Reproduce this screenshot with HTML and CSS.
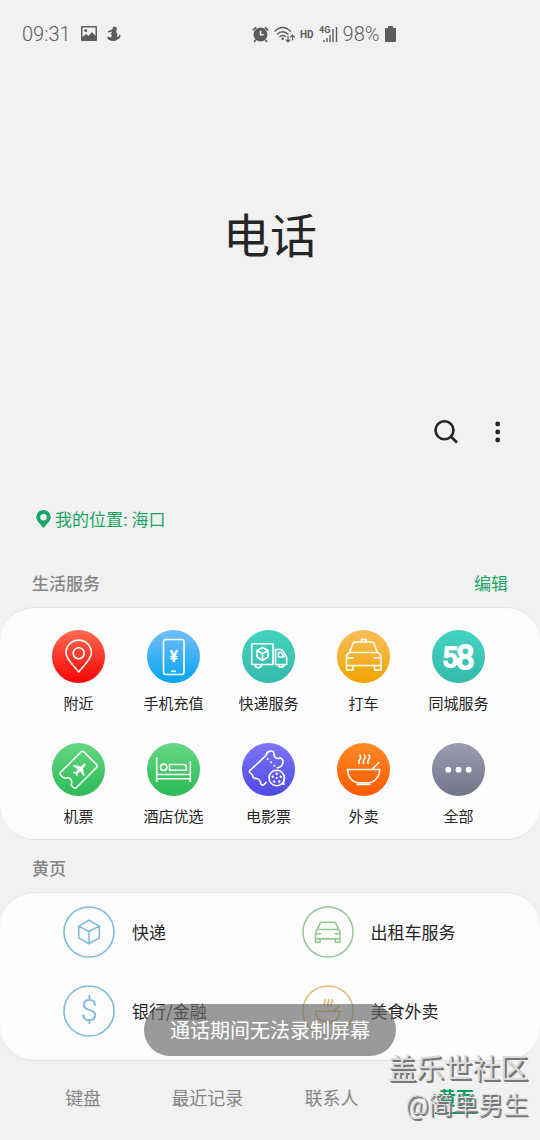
FILE: index.html
```html
<!DOCTYPE html>
<html lang="zh-CN">
<head>
<meta charset="utf-8">
<meta name="viewport" content="width=device-width, initial-scale=1">
<title>电话</title>
<link rel="stylesheet" href="styles.css">
</head>
<body>
<div class="screen">
  <div class="status">
    <div class="status-group status-left">
      <span class="status-text">09:31</span>
      <svg width="16" height="16" viewBox="0 0 16 16"><path fill="currentColor" fill-rule="evenodd" d="M1 0H15Q16 0 16 1V14Q16 15 15 15H1Q0 15 0 14V1Q0 0 1 0ZM1.500 1.500V11L5 8L7.500 10L11 6L14.500 10V1.500Z"/><circle cx="4.700" cy="4.500" r="1.500" fill="currentColor"/></svg>
      <svg width="14" height="16" viewBox="0 0 14 16"><path fill="currentColor" d="M5.500 2Q7-.5 9.500 1.500Q10.500 3.500 9 5.500Q11 8 10 11Q12 11 12.500 8.500L13.500 9Q13.500 12.500 10.500 13.500Q8 16 3.500 14.500Q-.5 13.500 .5 10.500L4 11.500L5 9L3.500 8L5.500 5.500L1 6.500V5L5.500 3.500Z"/></svg>
    </div>
    <div class="status-group">
      <svg width="17" height="17" viewBox="0 0 16 16"><path fill="currentColor" fill-rule="evenodd" d="M8 1.500A6.600 6.600 0 1 1 8 14.700A6.600 6.600 0 0 1 8 1.500ZM7.300 4.500V9H11V7.600H8.800V4.500Z"/><path d="M.8 4L4 1.300M12 1.300L15.200 4M3.500 13L2 15M12.500 13L14 15" stroke="currentColor" stroke-width="1.600" fill="none"/></svg>
      <svg width="21" height="17" viewBox="0 0 21 17"><g fill="none" stroke="currentColor" stroke-width="1.500"><path d="M.5 5.500Q8.500-2.500 17 5.500M3 8.500Q8.500 3 14.500 8.500M5.500 11Q8.500 8 12 11"/><path d="M14 10V15.500M11.700 13.500L14 15.800L16.300 13.500M18.500 14.500V9M16.200 11.300L18.500 9L20.800 11.300" stroke-width="1.200"/></g><circle cx="8.700" cy="12.800" r="1.300" fill="currentColor"/></svg>
      <span class="status-hd">HD</span>
      <svg width="19" height="18" viewBox="0 0 19 18"><text class="status-4g" x="0" y="8">4G</text><path d="M5 17V15M8 17V13M11 17V10M14 17V4M17.500 17V2" stroke="currentColor" stroke-width="1.400"/></svg>
      <span class="status-text">98%</span>
      <svg width="11" height="16" viewBox="0 0 11 16"><path fill="currentColor" d="M3 0H8V2H10Q11 2 11 3V15Q11 16 10 16H1Q0 16 0 15V3Q0 2 1 2H3Z"/></svg>
    </div>
  </div>

  <header class="hero"><h1>电话</h1></header>

  <div class="actions">
    <button class="action" type="button" aria-label="搜索"><svg width="26" height="26" viewBox="0 0 26 26"><circle cx="11.500" cy="11.300" r="9" fill="none" stroke="currentColor" stroke-width="2.600"/><path d="M17.500 17.300L24 23.500" stroke="currentColor" stroke-width="2.800"/></svg></button>
    <button class="action" type="button" aria-label="更多选项"><svg width="26" height="26" viewBox="0 0 26 26" fill="currentColor"><circle cx="12.700" cy="5" r="2.400"/><circle cx="12.700" cy="13" r="2.400"/><circle cx="12.700" cy="21" r="2.400"/></svg></button>
  </div>

  <main>
    <div class="location">
      <svg width="15" height="18" viewBox="0 0 15 18"><path fill="currentColor" fill-rule="evenodd" d="M7.500 0A7.200 7.200 0 0 1 14.700 7.200C14.700 11 10 14.500 7.500 18C5 14.500 .3 11 .3 7.200A7.200 7.200 0 0 1 7.500 0ZM7.500 4A3.300 3.300 0 1 0 7.500 10.600A3.300 3.300 0 1 0 7.500 4Z"/></svg>
      <span>我的位置: 海口</span>
    </div>

    <div class="section-head">
      <h2>生活服务</h2>
      <button class="edit" type="button">编辑</button>
    </div>
    <section class="card services">
      <button class="service" type="button">
        <span class="disc red"><svg viewBox="0 0 53 53"><path d="M26.700 42C22 35.500 14 29.500 14 22.800A12.700 12.700 0 0 1 39.400 22.800C39.400 29.500 31.400 35.500 26.700 42Z"/><circle cx="26.700" cy="23.300" r="5.500"/></svg></span>附近</button>
      <button class="service" type="button">
        <span class="disc blue"><svg viewBox="0 0 53 53"><rect x="16.500" y="9.500" width="20.500" height="35" rx="2.500"/><path d="M24 41.300H29"/><text class="yuan" x="26.700" y="32">¥</text></svg></span>手机充值</button>
      <button class="service" type="button">
        <span class="disc teal"><svg viewBox="0 0 53 53"><path d="M13 34.500H10.500Q9.700 34.500 9.700 33.700V14.500Q9.700 13.700 10.500 13.700H30.200Q31 13.700 31 14.500V34.500H19.500M13 34.500A3.200 3.200 0 0 0 19.500 34.500ZM36 34.500H33.500V19.500H38.500Q40 19.500 41 21L44 26Q44.700 27 44.700 29V34.500H42.300M36 34.500A3.200 3.200 0 0 0 42.300 34.500ZM36.500 22.500H39.500L42 27H36.500Z"/><path d="M20.500 17.500L26 20.500V27L20.500 30.500L15 27V20.500ZM15 20.500L20.500 23.700L26 20.500M20.500 23.700V30"/></svg></span>快递服务</button>
      <button class="service" type="button">
        <span class="disc amber"><svg viewBox="0 0 53 53"><path d="M24.500 11.500V9.500H29V11.500M18 12H35Q36.500 12 37 13.500L40.500 22.500H12.500L16 13.500Q16.500 12 18 12ZM12.500 22.500Q9.500 24 9.500 27.500V35.500H44V27.500Q44 24 40.500 22.500M9.500 35.500V40H16V35.500M37.500 35.500V40H44V35.500M9.500 28H17M36.500 28H44"/></svg></span>打车</button>
      <button class="service" type="button">
        <span class="disc teal"><svg viewBox="0 0 53 53"><text class="logo58" x="10" y="37">5<tspan class="logo58-big" x="24" y="39">8</tspan></text></svg></span>同城服务</button>
      <button class="service" type="button">
        <span class="disc green"><svg viewBox="0 0 53 53"><path d="M8.500 29.500L29 9Q30.500 7.500 32 9L44.500 21.500Q46 23 44.500 24.500L24.500 44.500Q23 46 21.500 44.500L19 42Q20.500 39 19 36.500Q17 34 14 35Q11.500 35.500 9 32.500Q7.500 31 8.500 29.500Z"/><path class="solid" d="M33.500 20.500Q32 20 30.500 21.800L28.800 23.500L22 21.800L20.800 23L26 26.500L23.500 29L21.500 28.700L20.800 29.500L23.600 31L25 33.600L25.800 33L25.500 30.800L28.200 28.300L31.500 33.300L32.700 32.200L31 25.500L32.500 23.800Q34 22 33.500 20.500Z"/></svg></span>机票</button>
      <button class="service" type="button">
        <span class="disc green"><svg viewBox="0 0 53 53"><path d="M9.700 14.500V39M43.300 18V39M9.700 31.500H43.300M9.700 35.700H43.300M22.500 21.500H36.500Q39.300 21.500 39.300 24V27.200H22.500Z"/><circle cx="16.700" cy="24.300" r="3.200"/></svg></span>酒店优选</button>
      <button class="service" type="button">
        <span class="disc violet"><svg viewBox="0 0 53 53"><path d="M24.500 39L21.500 42Q20 42.500 18.800 41Q18.500 36.500 14.500 35.500Q10.500 35.500 10.500 32L7.700 29.500Q7 28.500 8 27.500L24 12.500Q24.500 9 28 8Q32 7.500 32 11Q32 15 36 15.500Q40.500 14 41 18.500Q41 23.500 36 24.700H34.500"/><circle cx="34.700" cy="35" r="7.700"/><path d="M42.400 35Q42.500 39 40 41H43"/><g class="solid"><circle cx="25.700" cy="16" r="1"/><circle cx="29" cy="19.300" r="1"/><circle cx="32.300" cy="22.700" r="1"/><circle cx="34.700" cy="35" r="1"/><circle cx="34.700" cy="30.800" r="1.200"/><circle cx="38.700" cy="33.700" r="1.200"/><circle cx="37.200" cy="38.500" r="1.200"/><circle cx="32.200" cy="38.500" r="1.200"/><circle cx="30.700" cy="33.700" r="1.200"/></g></svg></span>电影票</button>
      <button class="service" type="button">
        <span class="disc orange"><svg viewBox="0 0 53 53"><path d="M10.500 26.500H42.700C42.700 34 37 39.700 31.500 39.700H21.700C16 39.700 10.500 34 10.500 26.500ZM19.500 41.500H33.500M35.500 26L42.300 19M22.500 11.500Q24.500 13.500 22.800 16.300Q21 19 22.500 21M27 11.500Q29 13.500 27.300 16.300Q25.500 19 27 21M31.500 11.500Q33.500 13.500 31.800 16.300Q30 19 31.500 21"/></svg></span>外卖</button>
      <button class="service" type="button">
        <span class="disc slate"><svg viewBox="0 0 53 53"><g class="solid"><circle cx="16.300" cy="26.700" r="2.900"/><circle cx="26.500" cy="26.700" r="2.900"/><circle cx="36.700" cy="26.700" r="2.900"/></g></svg></span>全部</button>
    </section>

    <div class="section-head second">
      <h2>黄页</h2>
    </div>
    <section class="card pages">
      <button class="page" type="button">
        <svg class="ring sky" viewBox="0 0 53 53"><circle cx="26.500" cy="26.500" r="25.500"/><path d="M26.500 14.500L37 20.500V32.500L26.500 38.500L16 32.500V20.500ZM16 20.500L26.500 26L37 20.500M26.500 26V38.500"/></svg><span>快递</span></button>
      <button class="page" type="button">
        <svg class="ring leaf" viewBox="0 0 53 53"><circle cx="26.500" cy="26.500" r="25.500"/><path d="M19.500 16.500H33Q34 16.500 34.500 17.500L37.500 24H15.500L18.500 17.500Q18.800 16.500 19.500 16.500ZM15.500 24Q13.800 25.500 13.800 28V33.500H38.800V28Q38.800 25.500 37.500 24M13.800 33.500V37H18.500V33.500M34 33.500V37H38.800V33.500M13.800 28.300H19.500M33 28.300H38.800"/></svg><span>出租车服务</span></button>
      <button class="page" type="button">
        <svg class="ring sky" viewBox="0 0 53 53"><circle cx="26.500" cy="26.500" r="25.500"/><text class="dollar" x="26.500" y="37">$</text></svg><span>银行/金融</span></button>
      <button class="page" type="button">
        <svg class="ring gold" viewBox="0 0 53 53"><circle cx="26.500" cy="26.500" r="25.500"/><path d="M13.800 26.800H38.500C38.500 32.500 34.500 37 30 37H22.500C18 37 13.800 32.500 13.800 26.800ZM20.500 38.800H32M32.500 26.500L38 21M23 14.500Q24.500 16 23.200 18Q22 20 23 22M26.500 14.500Q28 16 26.700 18Q25.500 20 26.500 22M30 14.500Q31.500 16 30.200 18Q29 20 30 22"/></svg><span>美食外卖</span></button>
    </section>
  </main>

  <nav class="tabs">
    <button class="tab" type="button"><span>键盘</span></button>
    <button class="tab" type="button"><span>最近记录</span></button>
    <button class="tab" type="button"><span>联系人</span></button>
    <button class="tab active" type="button" aria-current="page"><span>黄页</span></button>
  </nav>

  <div class="toast" role="status">通话期间无法录制屏幕</div>
  <div class="watermark"><span class="mark-site">盖乐世社区</span><span class="mark-user">@简单男生</span></div>
</div>
</body>
</html>
```

FILE: styles.css
```css
* {
  box-sizing: border-box;
}

body {
  margin: 0;
  background: #f1f1f1;
  color: #252525;
  font-family: Roboto, "Noto Sans CJK SC", sans-serif;
}

h1,
h2 {
  margin: 0;
}

button {
  padding: 0;
  border: 0;
  background: none;
  color: inherit;
  font: inherit;
  cursor: pointer;
}

.screen {
  position: relative;
  display: flex;
  flex-direction: column;
  min-height: 100vh;
}

.status {
  display: grid;
  grid-template-columns: 230fr 288fr;
  align-items: center;
  height: 68px;
  padding-left: 22px;
  color: #5c5c5c;
}

.status-group {
  display: flex;
  align-items: center;
  gap: 5px;
}

.status-left {
  gap: 10px;
}

.status-text {
  font-size: 20px;
  font-weight: 300;
  line-height: 24px;
}

.status-hd {
  font-size: 10px;
  font-weight: 700;
}

.status-4g {
  fill: currentColor;
  font-size: 9px;
  font-weight: 700;
}

.hero {
  display: flex;
  align-items: center;
  justify-content: center;
  min-height: 338px;
}

.hero h1 {
  font-size: 47px;
  font-weight: 400;
  line-height: 64px;
}

.actions {
  display: flex;
  justify-content: flex-end;
  padding-right: 16px;
}

.action {
  display: grid;
  place-items: center;
  width: 52px;
  height: 52px;
}

.location {
  display: flex;
  align-items: center;
  gap: 4px;
  padding: 49px 36px 0;
  color: #1ba566;
  font-family: "Noto Sans CJK SC", sans-serif;
  font-size: 17px;
  line-height: 24px;
}

.section-head {
  display: flex;
  align-items: center;
  justify-content: space-between;
  padding: 41px 32px 11px;
  font-size: 17px;
  line-height: 24px;
}

.section-head.second {
  padding-top: 17px;
}

.section-head h2 {
  color: #858585;
  font-size: 17px;
  font-weight: 500;
}

.edit {
  color: #1ba566;
}

.card {
  display: grid;
  border-top: 1px solid #e2e2e2;
  border-bottom: 1px solid #e2e2e2;
  border-radius: 34px;
  background: #fcfcfc;
}

.services {
  grid-template-columns: repeat(5, 1fr);
  row-gap: 29px;
  padding: 22px 34px 12px 31px;
}

.service {
  display: flex;
  flex-direction: column;
  align-items: center;
  gap: 11px;
  font-size: 15px;
  line-height: 20px;
}

.disc {
  width: 53px;
  height: 53px;
  border-radius: 50%;
}

.disc svg {
  display: block;
  fill: none;
  stroke: #fff;
  stroke-width: 1.6;
  stroke-linejoin: round;
}

.disc .solid {
  fill: #fff;
  stroke: none;
}

.red { background: linear-gradient(#ff6a50, #f50505); }
.blue { background: linear-gradient(#72bdfa, #06a6f0); }
.teal { background: linear-gradient(#43d3c1, #36b9aa); }
.amber { background: linear-gradient(#fbbd5c, #eda600); }
.green { background: linear-gradient(#64d783, #2dba55); }
.violet { background: linear-gradient(#7c76fa, #4e48e5); }
.orange { background: linear-gradient(#ff8b26, #ff5800); }
.slate { background: linear-gradient(#9a9daf, #72758a); }

.yuan {
  fill: #fff;
  stroke: none;
  font-size: 16px;
  font-weight: 700;
  text-anchor: middle;
}

.logo58 {
  fill: #fff;
  stroke-width: 2;
  font-size: 28px;
  font-weight: 400;
}

.logo58-big {
  font-size: 33px;
}

.pages {
  grid-template-columns: 1fr 1fr;
  row-gap: 27px;
  padding: 13px 0 23px 63px;
}

.page {
  display: flex;
  align-items: center;
  gap: 17px;
  font-family: "Noto Sans CJK SC", sans-serif;
  font-size: 17px;
  line-height: 24px;
}

.ring {
  width: 52px;
  height: 52px;
  fill: none;
  stroke: currentColor;
  stroke-width: 1.6;
  stroke-linejoin: round;
}

.sky { color: #7fbada; }
.leaf { color: #96c795; }
.gold { color: #e3bb6e; }

.dollar {
  fill: currentColor;
  stroke: none;
  font-family: Roboto, sans-serif;
  font-size: 32px;
  font-weight: 300;
  text-anchor: middle;
}

.tabs {
  display: flex;
  flex: 1;
  align-items: center;
  padding: 0 22px 4px 21px;
}

.tab {
  flex: 1;
  color: #858585;
  font-size: 18px;
  line-height: 26px;
}

.tab span {
  display: inline-block;
  padding: 2px 3px 0;
  border-bottom: 2px solid transparent;
}

.tab.active {
  color: #0e9b5d;
  font-weight: 700;
}

.tab.active span {
  border-color: currentColor;
}

.toast {
  position: absolute;
  bottom: 84px;
  left: 50%;
  padding: 13px 26px 11px;
  border-radius: 26px;
  background: rgba(103, 103, 103, 0.66);
  color: #fff;
  font-size: 20px;
  line-height: 28px;
  white-space: nowrap;
  transform: translateX(-50%);
}

.watermark {
  position: absolute;
  right: 12px;
  bottom: 16px;
  display: flex;
  flex-direction: column;
  align-items: flex-end;
  color: #dcdcdc;
  line-height: 36px;
  text-shadow: 1px 1px 0 #777, 2px 2px 0 #777;
  pointer-events: none;
}

.mark-site {
  font-size: 28px;
}

.mark-user {
  font-size: 25px;
  font-weight: 300;
}
```
